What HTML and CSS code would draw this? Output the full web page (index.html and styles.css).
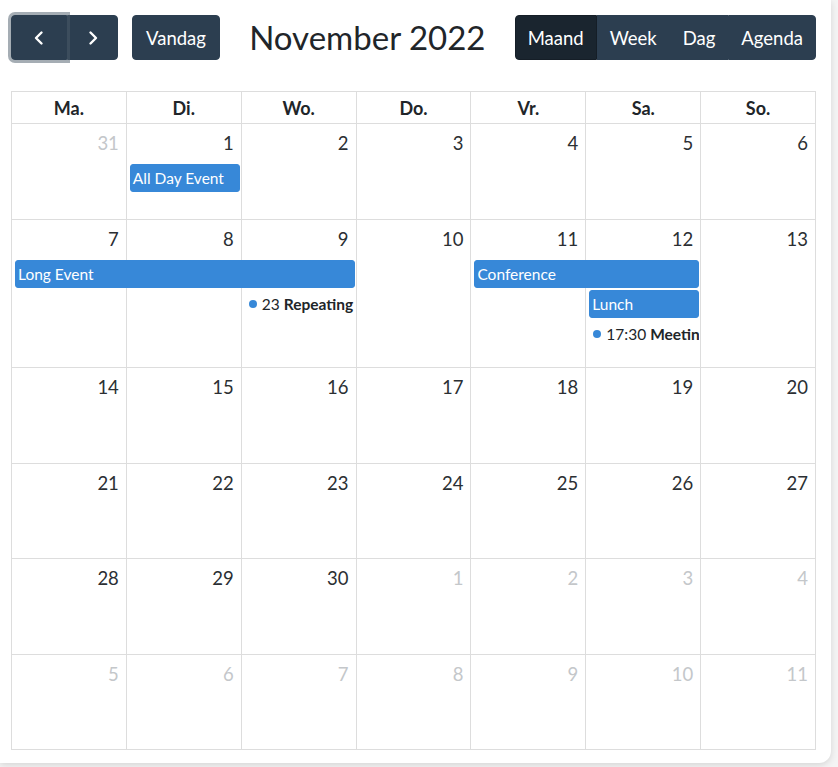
FILE: index.html
```html
<!DOCTYPE html>
<html lang="nl">
<head>
<meta charset="utf-8">
<title>Kalender</title>
<link rel="stylesheet" href="styles.css">
</head>
<body>
<div class="card">
  <div class="toolbar">
    <div class="chunk">
      <div class="btn-group">
        <button class="btn btn-icon focused" aria-label="vorige"><svg width="18" height="18" viewBox="0 0 18 18"><path d="M11.5 3.5 6 9l5.5 5.5" fill="none" stroke="#fff" stroke-width="2.4" stroke-linecap="round" stroke-linejoin="round"/></svg></button>
        <button class="btn btn-icon btn-next" aria-label="volgende"><svg width="18" height="18" viewBox="0 0 18 18"><path d="M6.5 3.5 12 9l-5.5 5.5" fill="none" stroke="#fff" stroke-width="2.4" stroke-linecap="round" stroke-linejoin="round"/></svg></button>
      </div>
      <button class="btn btn-today">Vandag</button>
    </div>
    <h2 class="title">November 2022</h2>
    <div class="chunk">
      <div class="btn-group">
        <button class="btn active">Maand</button>
        <button class="btn">Week</button>
        <button class="btn">Dag</button>
        <button class="btn">Agenda</button>
      </div>
    </div>
  </div>

  <div class="calendar">
    <div class="head">
      <div class="hcell">Ma.</div><div class="hcell">Di.</div><div class="hcell">Wo.</div><div class="hcell">Do.</div><div class="hcell">Vr.</div><div class="hcell">Sa.</div><div class="hcell">So.</div>
    </div>

    <div class="week w96">
      <div class="day c1 other"><span class="num">31</span></div>
      <div class="day c2"><span class="num">1</span></div>
      <div class="day c3"><span class="num">2</span></div>
      <div class="day c4"><span class="num">3</span></div>
      <div class="day c5"><span class="num">4</span></div>
      <div class="day c6"><span class="num">5</span></div>
      <div class="day c7"><span class="num">6</span></div>
      <div class="ev r2 c2">All Day Event</div>
    </div>

    <div class="week w148">
      <div class="day c1"><span class="num">7</span></div>
      <div class="day c2"><span class="num">8</span></div>
      <div class="day c3"><span class="num">9</span></div>
      <div class="day c4"><span class="num">10</span></div>
      <div class="day c5"><span class="num">11</span></div>
      <div class="day c6"><span class="num">12</span></div>
      <div class="day c7"><span class="num">13</span></div>
      <div class="ev r2 span-long">Long Event</div>
      <div class="ev r2 span-conf">Conference</div>
      <div class="ev r3 c6">Lunch</div>
      <div class="dot-ev r3 c3"><span class="dot"></span><span class="time">23</span><b>Repeating Event</b></div>
      <div class="dot-ev r4 c6"><span class="dot"></span><span class="time">17:30</span><b>Meeting</b></div>
    </div>

    <div class="week w96">
      <div class="day c1"><span class="num">14</span></div>
      <div class="day c2"><span class="num">15</span></div>
      <div class="day c3"><span class="num">16</span></div>
      <div class="day c4"><span class="num">17</span></div>
      <div class="day c5"><span class="num">18</span></div>
      <div class="day c6"><span class="num">19</span></div>
      <div class="day c7"><span class="num">20</span></div>
    </div>

    <div class="week w95">
      <div class="day c1"><span class="num">21</span></div>
      <div class="day c2"><span class="num">22</span></div>
      <div class="day c3"><span class="num">23</span></div>
      <div class="day c4"><span class="num">24</span></div>
      <div class="day c5"><span class="num">25</span></div>
      <div class="day c6"><span class="num">26</span></div>
      <div class="day c7"><span class="num">27</span></div>
    </div>

    <div class="week w96">
      <div class="day c1"><span class="num">28</span></div>
      <div class="day c2"><span class="num">29</span></div>
      <div class="day c3"><span class="num">30</span></div>
      <div class="day c4 other"><span class="num">1</span></div>
      <div class="day c5 other"><span class="num">2</span></div>
      <div class="day c6 other"><span class="num">3</span></div>
      <div class="day c7 other"><span class="num">4</span></div>
    </div>

    <div class="week w95">
      <div class="day c1 other"><span class="num">5</span></div>
      <div class="day c2 other"><span class="num">6</span></div>
      <div class="day c3 other"><span class="num">7</span></div>
      <div class="day c4 other"><span class="num">8</span></div>
      <div class="day c5 other"><span class="num">9</span></div>
      <div class="day c6 other"><span class="num">10</span></div>
      <div class="day c7 other"><span class="num">11</span></div>
    </div>
  </div>
</div>
</body>
</html>
```

FILE: styles.css
```css
html, body {
  margin: 0;
  padding: 0;
}
body {
  background: #f4f4f4;
  font-family: Lato, "Noto Sans", sans-serif;
  color: #212529;
  width: 838px;
  height: 767px;
  overflow: hidden;
}
.card {
  width: 831px;
  box-sizing: border-box;
  padding: 15px 15px 13px 11px;
  background: #fff;
  border-radius: 0 0 12px 0;
  box-shadow: 0 2px 7px rgba(0, 0, 0, 0.13);
}
.toolbar {
  display: flex;
  justify-content: space-between;
  align-items: center;
  height: 45px;
  margin-bottom: 31px;
}
.chunk {
  display: flex;
  align-items: center;
  gap: 14px;
}
.btn-group {
  display: flex;
}
.btn {
  font-family: inherit;
  font-size: 18.5px;
  color: #fff;
  background: #2c3e50;
  border: 1px solid #2c3e50;
  border-radius: 4px;
  height: 45px;
  padding: 0 12px;
  display: flex;
  align-items: center;
  justify-content: center;
  cursor: pointer;
}
.btn-group .btn {
  border-radius: 0;
}
.btn-group .btn:first-child {
  border-top-left-radius: 4px;
  border-bottom-left-radius: 4px;
}
.btn-group .btn:last-child {
  border-top-right-radius: 4px;
  border-bottom-right-radius: 4px;
}
.btn-icon {
  width: 56px;
  padding: 0;
}
.btn-next {
  width: 51px;
}
.btn-today {
  width: 88px;
  padding: 0;
}
.btn.active {
  background: #1a252f;
  border-color: #151e27;
}
.btn.focused {
  position: relative;
  z-index: 1;
  box-shadow: 0 0 0 3px rgba(76, 91, 106, 0.5);
}
.title {
  margin: 0;
  font-size: 33px;
  font-weight: 400;
  color: #212529;
  line-height: 1;
}

.calendar {
  border-top: 1px solid #ddd;
  border-left: 1px solid #ddd;
  width: 805px;
  box-sizing: border-box;
}
.head, .week {
  display: grid;
  grid-template-columns: repeat(7, 1fr);
}
.hcell {
  height: 31px;
  border-right: 1px solid #ddd;
  border-bottom: 1px solid #ddd;
  display: flex;
  align-items: center;
  justify-content: center;
  font-weight: 700;
  font-size: 18px;
}
.week {
  grid-template-rows: 40px auto auto auto 1fr;
}
.w96 { height: 96px; }
.w95 { height: 95px; }
.w148 { height: 148px; }
.day {
  grid-row: 1 / -1;
  border-right: 1px solid #ddd;
  border-bottom: 1px solid #ddd;
  display: flex;
  justify-content: flex-end;
  align-items: flex-start;
  min-width: 0;
}
.num {
  font-size: 18.5px;
  padding: 5px 7px 0 0;
  line-height: 28px;
  color: #2b2f33;
}
.other .num {
  color: #c4c7ca;
}
.c1 { grid-column: 1; }
.c2 { grid-column: 2; }
.c3 { grid-column: 3; }
.c4 { grid-column: 4; }
.c5 { grid-column: 5; }
.c6 { grid-column: 6; }
.c7 { grid-column: 7; }
.span-long { grid-column: 1 / 4; }
.span-conf { grid-column: 5 / 7; }
.r2 { grid-row: 2; }
.r3 { grid-row: 3; }
.r4 { grid-row: 4; }
.ev {
  align-self: start;
  height: 28px;
  margin: 0 2px 2px 3px;
  background: #3788d8;
  border: 1px solid #3788d8;
  border-radius: 3px;
  color: #fff;
  font-size: 15.5px;
  line-height: 26px;
  padding: 0 2px;
  box-sizing: border-box;
  white-space: nowrap;
  overflow: hidden;
  min-width: 0;
}
.dot-ev {
  align-self: start;
  margin: 0 2px 0 3px;
  height: 28px;
  display: flex;
  align-items: center;
  font-size: 15.5px;
  white-space: nowrap;
  overflow: hidden;
  min-width: 0;
  color: #212529;
}
.dot {
  flex: none;
  width: 8px;
  height: 8px;
  border-radius: 50%;
  background: #3788d8;
  margin: 0 5px 0 4px;
}
.time {
  margin-right: 4px;
}
.dot-ev b {
  font-weight: 700;
}
```
